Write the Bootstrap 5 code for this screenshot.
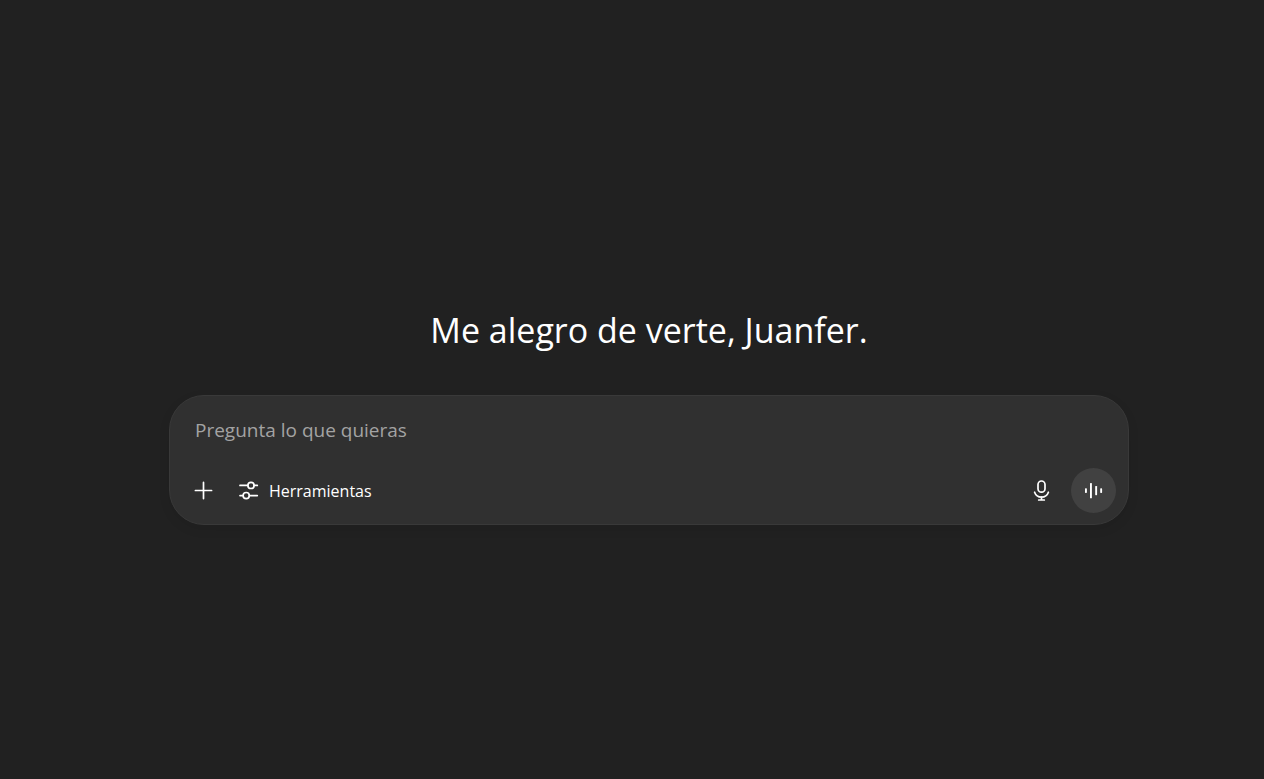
<!DOCTYPE html>
<html lang="es">
<head>
<meta charset="utf-8">
<meta name="viewport" content="width=device-width, initial-scale=1">
<title>Asistente</title>
<link href="https://cdn.jsdelivr.net/npm/bootstrap@5.3.0/dist/css/bootstrap.min.css" rel="stylesheet">
<style>
  body { background: #212121; color: #fff; font-family: "Segoe UI", "Open Sans", "Noto Sans", sans-serif; }
  .welcome { padding: 55px 16px 0 50px; }
  .welcome h1 { font-size: 34px; line-height: 42px; font-weight: 400; margin-bottom: 44px; }
  .composer { max-width: 960px; background: #303030; border: 1px solid #393939; border-radius: 35px; padding: 12px 12px 11px 11px; box-shadow: 0 4px 12px rgba(0, 0, 0, .08); }
  .composer .prompt { height: 44px; padding: 0 14px; font-size: 19px; line-height: 30px; color: #fff; }
  .composer .prompt::placeholder { color: #a3a3a3; opacity: 1; }
  .composer .prompt:focus { box-shadow: none; }
  .actions { margin-top: 16px; }
  .tool { height: 45px; padding: 0; color: #fff; border: 0; border-radius: 45px; font-size: 16px; line-height: 24px; }
  .round { width: 45px; }
  .tool:hover, .voice { background: #414141; color: #fff; }
  .tools-menu { padding: 0 12px; gap: 10px; }
  .dictate { margin-right: 7px; }
</style>
</head>
<body>
<main class="welcome min-vh-100 d-flex flex-column align-items-center justify-content-center">
  <h1 class="text-center">Me alegro de verte, Juanfer.</h1>
  <form class="composer w-100">
    <input type="text" class="prompt form-control border-0 bg-transparent" placeholder="Pregunta lo que quieras" aria-label="Pregunta lo que quieras">
    <div class="actions d-flex align-items-center">
      <button type="button" class="tool round btn d-flex align-items-center justify-content-center" aria-label="Añadir">
        <svg width="21" height="21" viewBox="0 0 21 21" fill="none" stroke="currentColor" stroke-width="1.7" stroke-linecap="round"><path d="M10.500 2.400v16.200M2.400 10.500h16.200"/></svg>
      </button>
      <button type="button" class="tool tools-menu btn d-flex align-items-center">
        <svg width="21" height="21" viewBox="0 0 21 21" fill="none" stroke="currentColor" stroke-width="1.7" stroke-linecap="round"><path d="M2 5.400h7.700M16.200 5.400h3.100M2 15.600h3M11.500 15.600h7.800"/><circle cx="13" cy="5.400" r="3.100"/><circle cx="8.200" cy="15.600" r="3.100"/></svg>
        <span>Herramientas</span>
      </button>
      <button type="button" class="tool round dictate btn d-flex align-items-center justify-content-center ms-auto" aria-label="Dictar">
        <svg width="21" height="21" viewBox="0 0 21 21" fill="none" stroke="currentColor" stroke-width="1.700" stroke-linecap="round"><rect x="7" y="1" width="7" height="11.200" rx="3.500"/><path d="M3.600 12.200a7.300 7.300 0 0 0 13.800 0M10.500 16.800v3M7.700 20h5.600"/></svg>
      </button>
      <button type="button" class="tool round voice btn d-flex align-items-center justify-content-center" aria-label="Usar el modo de voz">
        <svg width="21" height="21" viewBox="0 0 21 21" fill="currentColor"><rect x="2" y="8.300" width="1.900" height="4.600" rx=".6"/><rect x="7" y="2.900" width="1.900" height="15.400" rx=".6"/><rect x="12.200" y="6" width="1.900" height="9.200" rx=".6"/><rect x="17.200" y="8.300" width="1.900" height="4.600" rx=".6"/></svg>
      </button>
    </div>
  </form>
</main>
<script src="https://cdn.jsdelivr.net/npm/bootstrap@5.3.0/dist/js/bootstrap.bundle.min.js"></script>
</body>
</html>
